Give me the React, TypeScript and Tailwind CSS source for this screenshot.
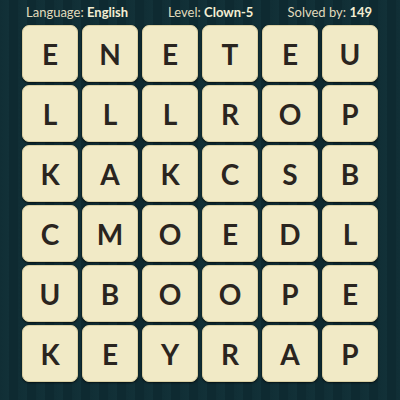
import React from 'react';

const rows = ['ENETEU', 'LLLROP', 'KAKCSB', 'CMOEDL', 'UBOOPE', 'KEYRAP'];

export default function App() {
  return (
    <div
      className="w-[400px] h-[400px] overflow-hidden bg-[repeating-linear-gradient(90deg,#11303760_0px,#123138_9px,#0e2a31_9px,#0e2a31_18px)] bg-[#102d34]"
      style={{ fontFamily: 'Lato, "Noto Sans", sans-serif' }}
    >
      <div className="h-[24px] flex items-center pl-[26px] pr-[28px] text-[13px] text-[#e0dbbd] leading-none">
        <span>
          Language: <b className="font-bold text-[#f3eed3]">English</b>
        </span>
        <span className="ml-[40px]">
          Level: <b className="font-bold text-[#f3eed3]">Clown-5</b>
        </span>
        <span className="ml-auto">
          Solved by: <b className="font-bold text-[#f3eed3]">149</b>
        </span>
      </div>
      <div className="mt-[1px] ml-[22px] grid grid-cols-[repeat(6,56px)] gap-x-[4px] gap-y-[3px]">
        {rows.join('').split('').map((ch, i) => (
          <div
            key={i}
            className="h-[57px] rounded-[7px] bg-[#f1eac6] border border-[#d9cfa2] shadow-[0_1px_2px_rgba(0,0,0,0.6)] flex items-center justify-center text-[28px] font-bold text-[#2a251f]"
          >
            {ch}
          </div>
        ))}
      </div>
    </div>
  );
}
